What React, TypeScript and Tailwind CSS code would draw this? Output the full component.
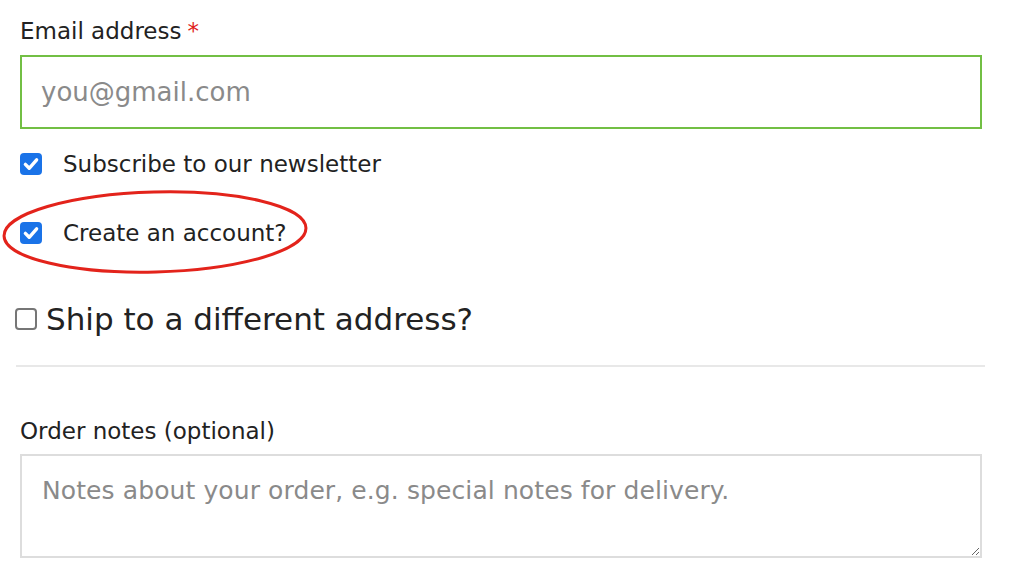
import React from "react";

const FONT = '"DejaVu Sans", "Open Sans", sans-serif';

function Check({ checked }: { checked: boolean }) {
  if (checked) {
    return (
      <span className="flex h-[22px] w-[22px] shrink-0 items-center justify-center rounded-[4px] bg-[#1a73e8]">
        <svg width="18" height="18" viewBox="0 0 16 16" fill="none">
          <path d="M3 8.3 L6.4 11.8 L13 4.3" stroke="white" strokeWidth="3" strokeLinecap="round" strokeLinejoin="round" />
        </svg>
      </span>
    );
  }
  return <span className="block h-[22px] w-[22px] shrink-0 rounded-[4px] border-2 border-[#767676] bg-white" />;
}

export default function App() {
  return (
    <div className="relative h-[582px] w-[1012px] overflow-hidden bg-white text-[#222]" style={{ fontFamily: FONT }}>
      <div className="flex flex-col pl-[20px]">
        <div className="mt-[16px] flex h-[30px] items-center text-[23px] leading-[30px] text-[#222]">
          <span>Email address</span>
          <span className="ml-[6px] text-[#e0201a]">*</span>
        </div>
        <div className="mt-[9px] flex h-[74px] w-[962px] items-center border-2 border-[#72bf44] pl-[19px] text-[26px] text-[#8a8a8a]">
          you@gmail.com
        </div>
        <div className="mt-[20px] flex h-[30px] items-center gap-[21px] text-[23px]">
          <Check checked />
          <span>Subscribe to our newsletter</span>
        </div>
        <div className="mt-[39px] flex h-[30px] items-center gap-[21px] text-[23px]">
          <Check checked />
          <span>Create an account?</span>
        </div>
        <div className="-ml-[5px] mt-[51px] flex h-[40px] items-center gap-[9px] text-[31px] leading-[40px] text-[#222]">
          <Check checked={false} />
          <span>Ship to a different address?</span>
        </div>
        <div className="-ml-[4px] mt-[26px] h-[2px] w-[969px] bg-[#e8e8e8]" />
        <div className="mt-[49px] flex h-[30px] items-center text-[23px]">Order notes (optional)</div>
        <textarea
          className="mt-[8px] h-[104px] w-[962px] resize-y border-2 border-[#dddddd] px-[20px] py-[20px] text-[25px] leading-[30px] tracking-[0.1px] text-[#222] outline-none placeholder:text-[#8a8a8a]"
          placeholder="Notes about your order, e.g. special notes for delivery."
          style={{ fontFamily: FONT }}
        />
      </div>
      <svg className="absolute left-0 top-[186px]" width="320" height="94" viewBox="0 0 320 94">
        <ellipse cx="155" cy="46" rx="151" ry="40" fill="none" stroke="#e3231b" strokeWidth="3" transform="rotate(-1.5 155 46)" />
      </svg>
    </div>
  );
}
